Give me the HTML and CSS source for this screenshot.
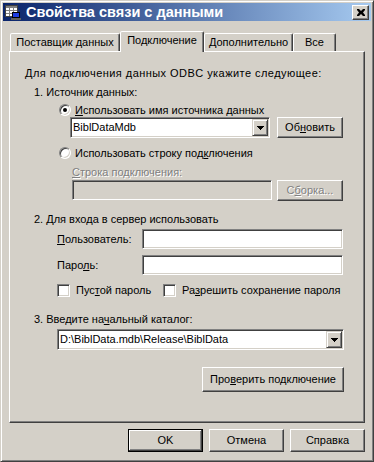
FILE: index.html
```html
<!DOCTYPE html>
<html lang="ru">
    <head>
        <meta charset="UTF-8">
        <meta name="viewport" content="width=device-width, initial-scale=1.0">
        <title>Свойства связи с данными</title>
        <link rel="stylesheet" href="styles.css">
    </head>
    <body>
        <div class="window">
            <div class="titlebar">
                <svg class="title-icon" width="16" height="16" viewBox="0 0 16 16">
                    <rect x="0.5" y="1.5" width="12" height="11" fill="#fff" stroke="#404040"/>
                    <rect x="1" y="2" width="11" height="2" fill="#808080"/>
                    <path d="M1 6.5H12M1 9.5H12M4.5 4V12M8.5 4V12" stroke="#808080"/>
                    <rect x="7.5" y="8.5" width="7" height="5" fill="#1C3CE0" stroke="#000"/>
                    <rect x="6" y="14" width="10" height="2" fill="#606060"/>
                </svg>
                <span class="title">Свойства связи с данными</span>
                <button class="caption-btn">
                    <svg width="8" height="7" viewBox="0 0 8 7">
                        <path d="M0 0h2l2 2 2-2h2v1l-2 2.5 2 2.5v1h-2l-2-2-2 2h-2v-1l2-2.5-2-2.5z" fill="#000"/>
                    </svg>
                </button>
            </div>

            <div class="tabs">
                <div class="tab tab-provider">Поставщик данных</div>
                <div class="tab tab-active">Подключение</div>
                <div class="tab tab-advanced">Дополнительно</div>
                <div class="tab tab-all">Все</div>
            </div>

            <div class="panel">
                <div class="intro">Для подключения данных ODBC укажите следующее:</div>

                <div class="step">1. Источник данных:</div>
                <div class="option">
                    <span class="radio checked"></span>
                    <span><u>И</u>спользовать имя источника данных</span>
                </div>
                <div class="source-row">
                    <div class="combo combo-source">
                        <span class="combo-text">BiblDataMdb</span>
                        <span class="combo-arrow">
                            <svg width="7" height="4" viewBox="0 0 7 4"><path d="M0 0h7v1h-1v1h-1v1h-1v1h-1v-1h-1v-1h-1v-1h-1z" fill="#000"/></svg>
                        </span>
                    </div>
                    <button class="btn btn-side">Об<u>н</u>овить</button>
                </div>

                <div class="option option-second">
                    <span class="radio"></span>
                    <span>Использовать строку под<u>к</u>лючения</span>
                </div>
                <div class="conn-label disabled"><u>С</u>трока подключения:</div>
                <div class="conn-row">
                    <div class="field field-disabled conn-field"></div>
                    <button class="btn btn-side disabled">С<u>б</u>орка...</button>
                </div>

                <div class="step step-login">2. Для входа в сервер использовать</div>
                <div class="login-row">
                    <span class="login-label"><u>П</u>ользователь:</span>
                    <div class="field login-field"></div>
                </div>
                <div class="login-row login-row-next">
                    <span class="login-label">Паро<u>л</u>ь:</span>
                    <div class="field login-field"></div>
                </div>
                <div class="check-row">
                    <label class="check check-blank"><span class="checkbox"></span><span>Пус<u>т</u>ой пароль</span></label>
                    <label class="check"><span class="checkbox"></span><span>Ра<u>з</u>решить сохранение пароля</span></label>
                </div>

                <div class="step step-catalog">3. Введите на<u>ч</u>альный каталог:</div>
                <div class="combo combo-catalog">
                    <span class="combo-text">D:\BiblData.mdb\Release\BiblData</span>
                    <span class="combo-arrow">
                        <svg width="7" height="4" viewBox="0 0 7 4"><path d="M0 0h7v1h-1v1h-1v1h-1v1h-1v-1h-1v-1h-1v-1h-1z" fill="#000"/></svg>
                    </span>
                </div>

                <button class="btn btn-test">Про<u>в</u>ерить подключение</button>
            </div>

            <div class="footer">
                <button class="btn btn-default">OK</button>
                <button class="btn">Отмена</button>
                <button class="btn">Справка</button>
            </div>
        </div>
    </body>
</html>
```

FILE: styles.css
```css
* {
    box-sizing: border-box;
}

body {
    margin: 0;
    font-family: "Liberation Sans", Arial, sans-serif;
    font-size: 11px;
    color: #000;
    background-color: #D4D0C8;
}

u {
    text-decoration: underline;
}

.window {
    width: 374px;
    height: 462px;
    padding: 2px;
    background-color: #D4D0C8;
    border: 1px solid;
    border-color: #D4D0C8 #404040 #404040 #D4D0C8;
    box-shadow: inset 1px 1px #fff, inset -1px -1px #808080;
}

/* title bar */
.titlebar {
    display: flex;
    align-items: center;
    height: 18px;
    padding: 0 2px;
    background: linear-gradient(to right, #0A246A, #A6CAF0);
    color: #fff;
}

.title-icon {
    flex: none;
    margin-right: 5px;
}

.title {
    flex: 1;
    font-size: 14.5px;
    font-weight: bold;
    white-space: nowrap;
}

.caption-btn {
    display: flex;
    align-items: center;
    justify-content: center;
    width: 17px;
    height: 15px;
    padding: 0;
    background-color: #D4D0C8;
    border: 1px solid;
    border-color: #fff #404040 #404040 #fff;
    box-shadow: inset -1px -1px #808080;
}

/* tabs */
.tabs {
    display: flex;
    align-items: flex-end;
    height: 20px;
    margin: 10px 0 0 7px;
}

.tab {
    height: 18px;
    padding-top: 2px;
    line-height: 13px;
    text-align: center;
    white-space: nowrap;
    background-color: #D4D0C8;
    border: 1px solid;
    border-bottom: none;
    border-color: #fff #404040 transparent #fff;
    border-radius: 2px 2px 0 0;
    box-shadow: inset -1px 0 #808080;
}

.tab-provider { width: 110px; }
.tab-active {
    position: relative;
    z-index: 1;
    width: 84px;
    height: 21px;
    margin-bottom: -1px;
}
.tab-advanced { width: 89px; }
.tab-all { width: 43px; }

/* page */
.panel {
    height: 372px;
    margin: 0 6px;
    padding: 14px 0 0 15px;
    border: 1px solid;
    border-color: #fff #404040 #404040 #fff;
    box-shadow: inset -1px -1px #808080;
}

.intro,
.step,
.conn-label {
    height: 14px;
    line-height: 14px;
    white-space: nowrap;
}

.intro {
    letter-spacing: 0.45px;
}

.step {
    margin: 5px 0 0 9px;
}

.step-login {
    margin-top: 11px;
}

.step-catalog {
    margin-top: 15px;
}

.option {
    display: flex;
    align-items: center;
    gap: 4px;
    height: 14px;
    margin: 4px 0 0 34px;
}

.option-second {
    margin-top: 8px;
}

.radio {
    display: flex;
    align-items: center;
    justify-content: center;
    width: 12px;
    height: 12px;
    border-radius: 50%;
    background-color: #fff;
    border: 1px solid;
    border-color: #808080 #fff #fff #808080;
    box-shadow: inset 1px 1px #404040, inset -1px -1px #D4D0C8;
}

.radio.checked::after {
    content: "";
    width: 4px;
    height: 4px;
    border-radius: 50%;
    background-color: #000;
}

.source-row {
    display: flex;
    gap: 7px;
    margin-left: 45px;
}

.conn-label {
    margin: 5px 0 0 47px;
}

.conn-row {
    display: flex;
    align-items: flex-start;
    gap: 5px;
    margin: 1px 0 0 47px;
}

.login-row {
    display: flex;
    align-items: center;
    margin: 3px 0 0 32px;
}

.login-row-next {
    margin-top: 6px;
}

.login-label {
    width: 85px;
}

.check-row {
    display: flex;
    align-items: center;
    height: 14px;
    margin: 8px 0 0 32px;
}

.check {
    display: flex;
    align-items: center;
    gap: 6px;
    white-space: nowrap;
}

.check-blank {
    width: 106px;
}

.checkbox {
    width: 13px;
    height: 13px;
    background-color: #fff;
    border: 1px solid;
    border-color: #808080 #fff #fff #808080;
    box-shadow: inset 1px 1px #404040, inset -1px -1px #D4D0C8;
}

/* fields */
.field,
.combo {
    background-color: #fff;
    border: 1px solid;
    border-color: #808080 #fff #fff #808080;
    box-shadow: inset 1px 1px #404040, inset -1px -1px #D4D0C8;
}

.field {
    height: 20px;
}

.field-disabled {
    background-color: #D4D0C8;
}

.conn-field {
    width: 200px;
}

.login-field {
    width: 201px;
}

.combo {
    display: flex;
    height: 21px;
    padding: 1px;
}

.combo-source {
    width: 200px;
}

.combo-catalog {
    width: 287px;
    margin: 3px 0 0 32px;
}

.combo-text {
    flex: 1;
    padding-left: 1px;
    line-height: 17px;
    white-space: nowrap;
}

.combo-arrow {
    display: flex;
    align-items: center;
    justify-content: center;
    width: 16px;
    background-color: #D4D0C8;
    border: 1px solid;
    border-color: #D4D0C8 #404040 #404040 #D4D0C8;
    box-shadow: inset 1px 1px #fff, inset -1px -1px #808080;
}

/* buttons */
.btn {
    display: flex;
    align-items: center;
    justify-content: center;
    width: 75px;
    height: 23px;
    padding: 0;
    font-family: "Liberation Sans", Arial, sans-serif;
    font-size: 11px;
    font-weight: normal;
    line-height: 13px;
    color: #000;
    background-color: #D4D0C8;
    border: 1px solid;
    border-color: #fff #404040 #404040 #fff;
    box-shadow: inset -1px -1px #808080;
}

.btn-side {
    width: 66px;
    height: 21px;
}

.btn-test {
    width: 142px;
    height: 25px;
    margin: 17px 0 0 177px;
}

.btn-default {
    border-color: #000;
    box-shadow: inset -1px -1px #404040, inset 1px 1px #fff, inset -2px -2px #808080;
}

.disabled {
    color: #808080;
    text-shadow: 1px 1px #fff;
}

.footer {
    display: flex;
    justify-content: flex-end;
    gap: 6px;
    margin: 6px 6px 0 0;
}
```
